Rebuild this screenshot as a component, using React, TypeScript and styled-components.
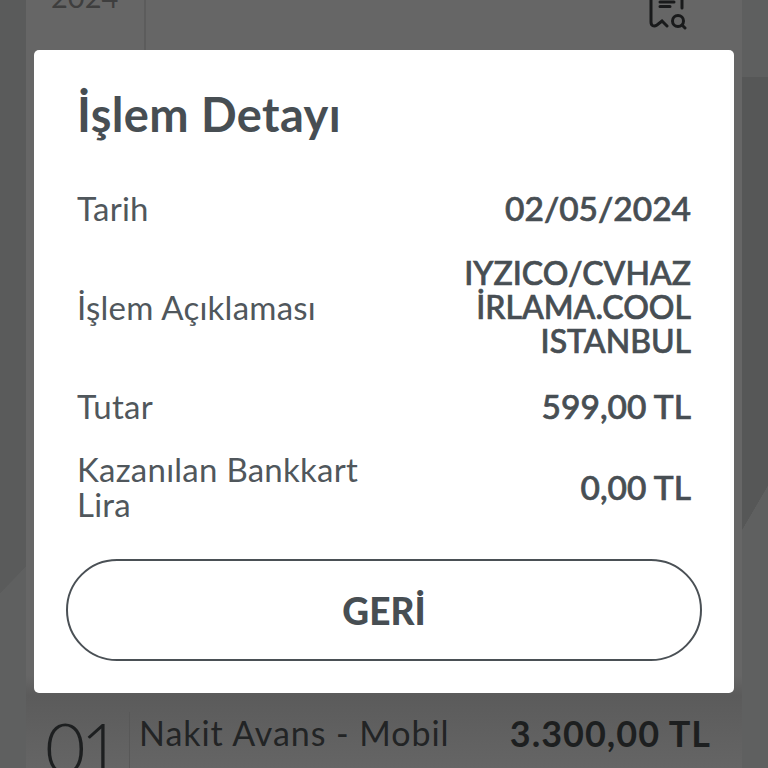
import styled, { createGlobalStyle } from "styled-components";

const GlobalStyle = createGlobalStyle`
  html, body {
    margin: 0;
    padding: 0;
  }
  body {
    font-family: "Lato", "Liberation Sans", sans-serif;
    background: #5c5d5d;
  }
`;

const Page = styled.div`
  position: relative;
  width: 768px;
  height: 768px;
  overflow: hidden;
  padding: 0 26px;
  box-sizing: border-box;
  display: flex;
  background:
    linear-gradient(120.3deg, transparent 0 65.2%, #5f6060 65.3% 100%) right top / 26px 100% no-repeat,
    linear-gradient(180deg, #5e5f5f 0 77px, #565757 77px 100%) right top / 26px 100% no-repeat,
    linear-gradient(134deg, #5a5b5b 0 74.6%, #5f6060 74.7% 100%) left top / 26px 100% no-repeat;
`;

const Panel = styled.div`
  flex: 1;
  display: flex;
  flex-direction: column;
  justify-content: space-between;
  background: linear-gradient(180deg, #666 0 88%, #5b5b5b 90.5%, #656565 100%);
`;

const TopRow = styled.div`
  display: flex;
  height: 110px;
  margin-top: -18px;
`;

const BottomRow = styled.div`
  display: flex;
  height: 56px;
`;

const TopDate = styled.div`
  width: 120px;
  flex: none;
  border-right: 2px solid #5c5c5c;
  padding: 0 0 0 25px;
  box-sizing: border-box;
  color: #3e3e3e;
  font-size: 29px;
  line-height: 30px;
  font-weight: 400;
`;

const TopActions = styled.div`
  flex: 1;
  display: flex;
  justify-content: flex-end;
  padding: 0 54px 0 0;
`;

const ReceiptIcon = styled.svg`
  width: 40px;
  height: 50px;
  margin-top: -2px;
  flex: none;
  color: #191a1b;
`;

const Day = styled.div`
  width: 104px;
  flex: none;
  padding: 0 0 0 19px;
  box-sizing: border-box;
  border-right: 1px solid #585858;
  font-size: 70px;
  line-height: 70px;
  font-weight: 300;
  letter-spacing: -5px;
  color: #1d1f20;
`;

const BottomTitle = styled.div`
  flex: 1;
  padding: 2px 0 0 9px;
  font-size: 34px;
  line-height: 38px;
  font-weight: 400;
  letter-spacing: 0.95px;
  color: #222425;
`;

const BottomAmount = styled.div`
  padding: 2px 31px 0 0;
  font-size: 36px;
  line-height: 38px;
  font-weight: 700;
  letter-spacing: 1px;
  color: #1d1f20;
`;

const Modal = styled.div`
  position: absolute;
  left: 34px;
  top: 50px;
  width: 700px;
  height: 643px;
  background: #fff;
  border-radius: 5px;
  box-sizing: border-box;
  padding: 34px 32px 32px;
  display: flex;
  flex-direction: column;
  color: #474e53;
`;

const Title = styled.h1`
  margin: 0 0 39px 11px;
  font-size: 47px;
  line-height: 60px;
  font-weight: 700;
  letter-spacing: 0.4px;
`;

const Details = styled.div`
  flex: 1;
  display: flex;
  flex-direction: column;
  padding: 0 11px 0 12px;
`;

const DetailRow = styled.div<{ $height: number }>`
  display: flex;
  justify-content: space-between;
  align-items: center;
  height: ${(p) => p.$height}px;
`;

const Label = styled.div`
  width: 300px;
  font-size: 33px;
  line-height: 35px;
  font-weight: 400;
  letter-spacing: 0.25px;
  margin-left: -1px;
  color: #50575c;
`;

const Value = styled.div`
  text-align: right;
  font-size: 33.5px;
  line-height: 34px;
  font-weight: 500;
  white-space: nowrap;
  -webkit-text-stroke: 0.7px #474e53;
`;

const Description = styled(Value)`
  font-size: 32px;
`;

const BackButton = styled.button`
  height: 102px;
  flex: none;
  border: 2px solid #4a5055;
  border-radius: 51px;
  background: #fff;
  color: #474e53;
  font-family: inherit;
  font-size: 37px;
  font-weight: 900;
  padding: 0;
`;

export default function App() {
  return (
    <>
      <GlobalStyle />
      <Page>
        <Panel>
          <TopRow>
            <TopDate>2024</TopDate>
            <TopActions>
              <ReceiptIcon viewBox="0 0 40 50" fill="none" stroke="currentColor" strokeWidth="3" strokeLinecap="round">
                <path d="M3 0V42C3 46 6 47 9 45L14 41L19 46" />
                <path d="M12 22H26M12 26.5H22M34 18V28" />
                <circle cx="30" cy="41" r="5.5" />
                <path d="M34 45L37 48" />
              </ReceiptIcon>
            </TopActions>
          </TopRow>
          <BottomRow>
            <Day>01</Day>
            <BottomTitle>Nakit Avans - Mobil</BottomTitle>
            <BottomAmount>3.300,00 TL</BottomAmount>
          </BottomRow>
        </Panel>
        <Modal>
          <Title>İşlem Detayı</Title>
          <Details>
            <DetailRow $height={50}>
              <Label>Tarih</Label>
              <Value>02/05/2024</Value>
            </DetailRow>
            <DetailRow $height={148}>
              <Label>İşlem Açıklaması</Label>
              <Description>IYZICO/CVHAZ<br />İRLAMA.COOL<br />ISTANBUL</Description>
            </DetailRow>
            <DetailRow $height={50}>
              <Label>Tutar</Label>
              <Value>599,00 TL</Value>
            </DetailRow>
            <DetailRow $height={112}>
              <Label>Kazanılan Bankkart Lira</Label>
              <Value>0,00 TL</Value>
            </DetailRow>
          </Details>
          <BackButton>GERİ</BackButton>
        </Modal>
      </Page>
    </>
  );
}
